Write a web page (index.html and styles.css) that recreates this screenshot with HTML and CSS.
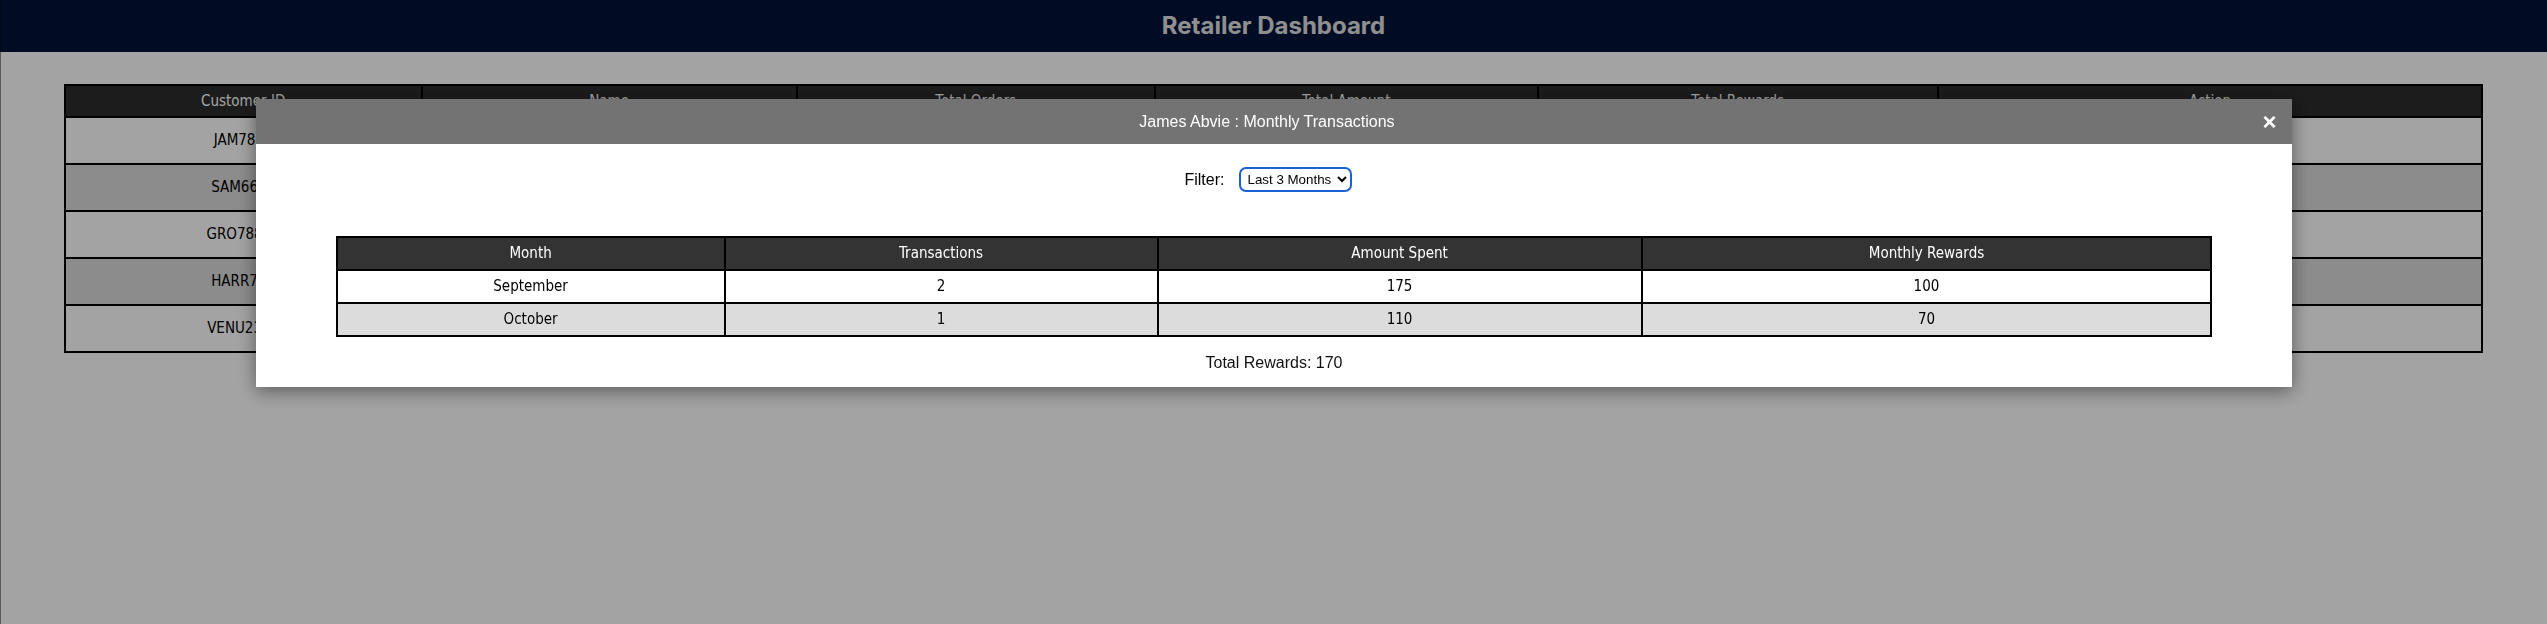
FILE: index.html
```html
<!DOCTYPE html>
<html lang="en">
<head>
<meta charset="utf-8">
<title>Retailer Dashboard</title>
<link rel="stylesheet" href="styles.css">
</head>
<body>
<header class="topbar">
  <h1 class="title">Retailer Dashboard</h1>
</header>
<main class="content">
  <table class="customers">
    <thead>
      <tr>
        <th class="col-id">Customer ID</th>
        <th class="col-name">Name</th>
        <th class="col-orders">Total Orders</th>
        <th class="col-amount">Total Amount</th>
        <th class="col-rewards">Total Rewards</th>
        <th>Action</th>
      </tr>
    </thead>
    <tbody>
      <tr><td>JAM7845</td><td>James Abvie</td><td>3</td><td>285</td><td>170</td><td><button class="view-btn">View</button></td></tr>
      <tr><td>SAM6612</td><td>Samuel Ortiz</td><td>4</td><td>410</td><td>320</td><td><button class="view-btn">View</button></td></tr>
      <tr><td>GRO78813</td><td>Grover Lane</td><td>2</td><td>150</td><td>150</td><td><button class="view-btn">View</button></td></tr>
      <tr><td>HARR745</td><td>Harry Mills</td><td>5</td><td>620</td><td>540</td><td><button class="view-btn">View</button></td></tr>
      <tr><td>VENU2317</td><td>Venu Gopal</td><td>1</td><td>95</td><td>45</td><td><button class="view-btn">View</button></td></tr>
    </tbody>
  </table>
</main>

<div class="overlay">
  <div class="modal">
    <div class="modal-header">
      <span class="modal-title">James Abvie : Monthly Transactions</span>
      <button class="close-btn" aria-label="Close">×</button>
    </div>
    <div class="modal-body">
      <div class="filter">
        <label class="filter-label" for="range">Filter:</label>
        <select id="range" class="filter-select">
          <option>Last 3 Months</option>
          <option>Last 6 Months</option>
          <option>Last 12 Months</option>
        </select>
      </div>
      <table class="monthly">
        <thead>
          <tr>
            <th class="m-month">Month</th>
            <th class="m-tx">Transactions</th>
            <th class="m-amount">Amount Spent</th>
            <th>Monthly Rewards</th>
          </tr>
        </thead>
        <tbody>
          <tr><td>September</td><td>2</td><td>175</td><td>100</td></tr>
          <tr><td>October</td><td>1</td><td>110</td><td>70</td></tr>
        </tbody>
      </table>
      <p class="total">Total Rewards: 170</p>
    </div>
  </div>
</div>
</body>
</html>
```
FILE: styles.css
```css
* { box-sizing: border-box; }

html, body {
  margin: 0;
  padding: 0;
  background: #ffffff;
  height: 100%;
}

body {
  font-family: "Liberation Sans", Arial, sans-serif;
}

.topbar {
  height: 52px;
  background: #001338;
  display: flex;
  align-items: center;
  justify-content: center;
}

.title {
  margin: 0;
  font-family: Inter, "Liberation Sans", sans-serif;
  font-weight: 700;
  font-size: 24px;
  line-height: 52px;
  color: #e0e0e0;
}

.content {
  padding-top: 32px;
}

.customers {
  width: 95%;
  margin: 0 auto;
  border-collapse: collapse;
  border: 2px solid #000;
  font-family: "DejaVu Sans Condensed", "DejaVu Sans", sans-serif;
  font-stretch: condensed;
  font-size: 15px;
}

.customers th {
  background: #2c2c2c;
  color: #ffffff;
  font-weight: 400;
  padding: 5px 8px;
  line-height: 20px;
  border: 2px solid #000;
}

.customers td {
  height: 47px;
  padding: 0 8px;
  line-height: 21px;
  text-align: center;
  vertical-align: middle;
  border: 2px solid #000;
  color: #000;
}

.customers tbody tr:nth-child(odd) td { background: #ffffff; }
.customers tbody tr:nth-child(even) td { background: #dcdcdc; }

.col-id { width: 357px; }
.col-name { width: 375px; }
.col-orders { width: 358px; }
.col-amount { width: 383px; }
.col-rewards { width: 400px; }

.view-btn {
  font: inherit;
  font-size: 13px;
  height: 22px;
  line-height: 16px;
  padding: 0 10px;
  vertical-align: middle;
}

.overlay {
  position: fixed;
  inset: 0;
  background: rgba(0, 0, 0, 0.36);
  display: flex;
  justify-content: center;
  align-items: flex-start;
  padding-top: 99px;
  border-left: 1px solid rgba(0, 0, 0, 0.45);
}

.modal {
  width: 80%;
  background: #ffffff;
  box-shadow: 0 4px 18px rgba(0, 0, 0, 0.45);
}

.modal-header {
  height: 45px;
  background: #737373;
  display: flex;
  align-items: center;
  padding: 0 16px;
}

.modal-title {
  flex: 1;
  text-align: center;
  color: #ffffff;
  font-size: 16px;
}

.close-btn {
  border: 0;
  background: transparent;
  padding: 0;
  color: #ffffff;
  font-family: "Liberation Sans", Arial, sans-serif;
  font-weight: 700;
  font-size: 24px;
  line-height: 24px;
  cursor: pointer;
}

.modal-body {
  padding: 23px 80px 15px;
}

.filter {
  height: 25px;
  display: flex;
  align-items: center;
  justify-content: center;
  gap: 15px;
  padding-right: 11px;
}

.filter-label {
  font-size: 16px;
  color: #000;
}

.filter-select {
  width: 113px;
  height: 25px;
  border: 2px solid #1a62d3;
  border-radius: 7px;
  background: #fff;
  font-family: "Liberation Sans", Arial, sans-serif;
  font-size: 13.33px;
  color: #000;
  padding: 0 2px;
}

.monthly {
  width: 100%;
  margin-top: 44px;
  border-collapse: collapse;
  border: 2px solid #000;
  font-family: "DejaVu Sans Condensed", "DejaVu Sans", sans-serif;
  font-stretch: condensed;
  font-size: 15px;
}

.monthly th {
  background: #333333;
  color: #ffffff;
  font-weight: 400;
  padding: 5px 8px;
  line-height: 21px;
  border: 2px solid #000;
}

.monthly td {
  padding: 5px 8px;
  line-height: 21px;
  text-align: center;
  border: 2px solid #000;
  color: #000;
}

.monthly tbody tr:nth-child(odd) td { background: #ffffff; }
.monthly tbody tr:nth-child(even) td { background: #dcdcdc; }

.m-month { width: 388px; }
.m-tx { width: 433px; }
.m-amount { width: 484px; }

.total {
  margin: 16px 0 0;
  text-align: center;
  font-size: 16px;
  line-height: 19px;
  color: #111;
}
```
